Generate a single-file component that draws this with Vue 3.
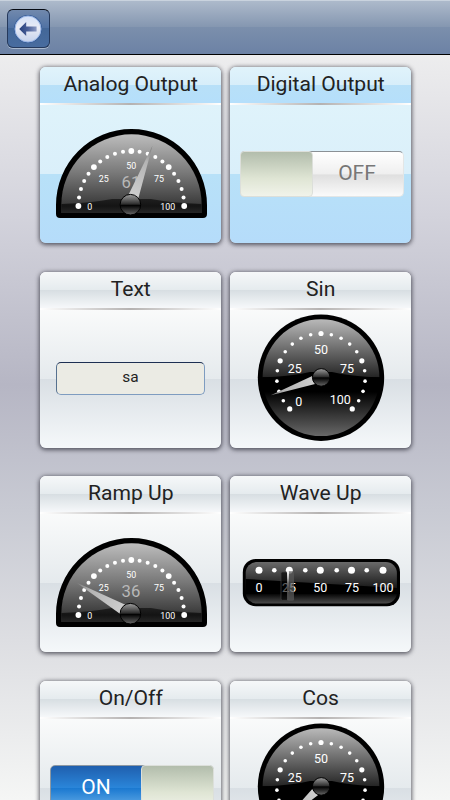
<template>
  <div class="page">
    <header class="toolbar">
      <button class="back" aria-label="Back">
        <svg width="30" height="30" viewBox="0 0 30 30">
          <defs>
            <linearGradient id="ball" x1="0" y1="0" x2="0" y2="1">
              <stop offset="0" stop-color="#d3e1f8" />
              <stop offset="0.45" stop-color="#e9ebf5" />
              <stop offset="1" stop-color="#c5d2ec" />
            </linearGradient>
            <linearGradient id="arrow" x1="0" y1="0" x2="1" y2="0">
              <stop offset="0" stop-color="#253f7c" />
              <stop offset="0.5" stop-color="#4a5f98" />
              <stop offset="1" stop-color="#8c9bc4" />
            </linearGradient>
          </defs>
          <circle cx="15" cy="15" r="14" fill="#365c97" />
          <circle cx="15" cy="15" r="13" fill="url(#ball)" stroke="#9ab6e6" stroke-width="1" />
          <path d="M6.2 15 L13.2 8 V12.5 H23.6 V17.5 H13.2 V22 Z" fill="url(#arrow)" />
        </svg>
      </button>
    </header>

    <main class="grid">
      <section v-for="card in cards" :key="card.title" class="card" :class="{ output: card.output }">
        <h2>{{ card.title }}</h2>
        <div class="line"></div>

        <div class="body">
          <div v-if="card.type === 'switch'" class="switch" :class="{ on: card.on }">
            <span class="state">{{ card.on ? 'ON' : 'OFF' }}</span>
            <span class="knob"></span>
          </div>

          <div v-else-if="card.type === 'text'" class="field">{{ card.value }}</div>

          <svg v-else-if="card.type === 'half'" width="182" height="138" viewBox="0 38 182 138">
            <path d="M16 147 V138 A75.5 76 0 0 1 167 138 V147 Q167 151 163 151 H20 Q16 151 16 147 Z" fill="#000" />
            <path d="M21.3 146 V138 A70.2 70.7 0 0 1 161.7 138 V146 Z" fill="url(#halfFill)" />
            <path d="M21.3 146 V137 Q52 136 72 132 H111 Q131 136 161.7 137 V146 Z" fill="url(#halfBase)" />
            <circle v-for="(d, i) in halfDots" :key="i" :cx="d.x" :cy="d.y" :r="d.big ? 2.9 : 2" fill="#fff" />
            <g class="small-label">
              <text x="49.7" y="143.3">0</text>
              <text x="63.8" y="115.3">25</text>
              <text x="91.3" y="101.5">50</text>
              <text x="119" y="115.3">75</text>
              <text x="127.7" y="143.3">100</text>
            </g>
            <text class="value" x="91" y="121.4">{{ card.value }}</text>
            <g transform="translate(90.4 137.7)">
              <path d="M-63 0 L-7 -5.4 V5.4 Z" fill="url(#needle)" :transform="`rotate(${card.angle})`" />
              <circle r="10.3" fill="url(#hub)" stroke="#000" stroke-width="1" />
            </g>
          </svg>

          <svg v-else-if="card.type === 'round'" width="182" height="138" viewBox="0 38 182 138">
            <circle cx="91" cy="105.7" r="63.2" fill="#000" />
            <circle cx="91" cy="105.7" r="58.4" fill="url(#roundFill)" />
            <path d="M32.6 105.4 Q62 104.5 80 100 H102 Q120 104.5 149.4 105.4 L148 112 H34 Z" fill="#000" />
            <circle v-for="(d, i) in roundDots" :key="i" :cx="d.x" :cy="d.y" :r="d.big ? 2.6 : 1.8" fill="#fff" />
            <g class="label">
              <text x="68.8" y="134.3">0</text>
              <text x="64.8" y="101.3">25</text>
              <text x="91" y="82">50</text>
              <text x="117" y="101.3">75</text>
              <text x="110.2" y="131.5">100</text>
            </g>
            <g transform="translate(91.2 105.4)">
              <path d="M-53.5 0 L-8 -4.2 V4.2 Z" fill="url(#needle)" :transform="`rotate(${card.angle})`" />
              <circle r="8.8" fill="url(#hub)" stroke="#000" stroke-width="1" />
            </g>
          </svg>

          <svg v-else width="182" height="138" viewBox="0 38 182 138">
            <rect x="12.8" y="83" width="157.2" height="47.2" rx="13" fill="#000" />
            <rect x="15.7" y="86" width="151.2" height="41.5" rx="11" fill="url(#barFill)" />
            <path d="M15.7 103 L166.9 112 V118 H15.7 Z" fill="#000" />
            <circle v-for="(x, i) in barDots" :key="i" :cx="x" cy="94.3" :r="i % 2 ? 2.3 : 3.5" fill="#fff" />
            <g class="label">
              <text x="29" y="116.2">0</text>
              <text x="59" y="116.2">25</text>
              <text x="90.3" y="116.2">50</text>
              <text x="122" y="116.2">75</text>
              <text x="153" y="116.2">100</text>
            </g>
            <rect x="51" y="96" width="7" height="28.3" rx="1.5" fill="#000" fill-opacity="0.62" stroke="#444" stroke-width="0.7" />
            <rect x="57" y="95.2" width="7" height="29.6" rx="1.5" fill="#585858" fill-opacity="0.75" />
            <rect x="57" y="95.2" width="2" height="18" fill="url(#glint)" />
          </svg>
        </div>
      </section>
    </main>

    <svg class="defs" width="0" height="0">
      <defs>
        <linearGradient id="halfFill" x1="0" y1="0" x2="0" y2="1">
          <stop offset="0" stop-color="#bdbdbd" />
          <stop offset="0.5" stop-color="#777" />
          <stop offset="1" stop-color="#2a2a2a" />
        </linearGradient>
        <linearGradient id="halfBase" x1="0" y1="0" x2="0" y2="1">
          <stop offset="0" stop-color="#1f1f1f" />
          <stop offset="0.5" stop-color="#141414" />
          <stop offset="1" stop-color="#262626" />
        </linearGradient>
        <linearGradient id="roundFill" x1="0" y1="0" x2="0" y2="1">
          <stop offset="0" stop-color="#b9b9b9" />
          <stop offset="0.49" stop-color="#262626" />
          <stop offset="0.5" stop-color="#000" />
          <stop offset="0.62" stop-color="#000" />
          <stop offset="1" stop-color="#686868" />
        </linearGradient>
        <linearGradient id="barFill" x1="0" y1="0" x2="0" y2="1">
          <stop offset="0" stop-color="#6a6a6a" />
          <stop offset="0.6" stop-color="#1c1c1c" />
          <stop offset="0.75" stop-color="#000" />
          <stop offset="1" stop-color="#4c4c4c" />
        </linearGradient>
        <linearGradient id="needle" x1="0" y1="0" x2="1" y2="0">
          <stop offset="0" stop-color="#777" />
          <stop offset="0.3" stop-color="#b4b4b4" />
          <stop offset="1" stop-color="#cfcfcf" />
        </linearGradient>
        <linearGradient id="hub" x1="0" y1="0" x2="0" y2="1">
          <stop offset="0" stop-color="#a0a0a0" />
          <stop offset="0.48" stop-color="#2b2b2b" />
          <stop offset="0.52" stop-color="#000" />
          <stop offset="0.6" stop-color="#111" />
          <stop offset="1" stop-color="#686868" />
        </linearGradient>
        <linearGradient id="glint" x1="0" y1="0" x2="0" y2="1">
          <stop offset="0" stop-color="#fff" />
          <stop offset="0.4" stop-color="#aaa" />
          <stop offset="1" stop-color="#444" stop-opacity="0" />
        </linearGradient>
      </defs>
    </svg>
  </div>
</template>

<script setup>
import { ref } from 'vue'

const cards = ref([
  { title: 'Analog Output', type: 'half', value: 61, angle: 110.5, output: true },
  { title: 'Digital Output', type: 'switch', on: false, output: true },
  { title: 'Text', type: 'text', value: 'sa' },
  { title: 'Sin', type: 'round', angle: -19.5 },
  { title: 'Ramp Up', type: 'half', value: 36, angle: 30 },
  { title: 'Wave Up', type: 'bar' },
  { title: 'On/Off', type: 'switch', on: true },
  { title: 'Cos', type: 'round', angle: -43 }
])

// 21 dots from 0 to 100, every fifth one is big
function makeDots(cx, cy, rx, ry, start, sweep) {
  const dots = []
  for (let i = 0; i <= 20; i++) {
    const a = ((start + (sweep * i) / 20) * Math.PI) / 180
    dots.push({ x: cx + rx * Math.cos(a), y: cy + ry * Math.sin(a), big: i % 5 === 0 })
  }
  return dots
}

const halfDots = makeDots(91.3, 139, 52.9, 55, 180, 180)
const roundDots = makeDots(91, 105.7, 44.2, 44.2, 135, 270)
const barDots = [29, 44.3, 59.3, 75.3, 90.3, 106.7, 121.5, 136.7, 153]
</script>

<style>
body {
  margin: 0;
  overflow: hidden;
}
</style>

<style scoped>
.page {
  height: 800px;
  overflow: hidden;
  font-family: Roboto, Arial, sans-serif;
  background: linear-gradient(#ededee 55px, #d3d3dc 215px, #b6b6c4 385px, #c8cad3 510px, #dddee2 640px, #f5f6f5 800px);
}

/* Toolbar */
.toolbar {
  box-sizing: border-box;
  height: 55px;
  padding: 8px 0 0 7px;
  border-top: 1px solid #c9d3de;
  border-bottom: 1px solid #000;
  background: linear-gradient(#adbacb, #8496b0 50%, #7b8fac 50%, #6c82a5);
}

.back {
  display: flex;
  align-items: center;
  justify-content: center;
  box-sizing: border-box;
  width: 43px;
  height: 39px;
  padding: 0 2px 0 0;
  border: 1px solid #25395c;
  border-top-color: #060b14;
  border-radius: 6px;
  background: linear-gradient(#7189ad, #4f71a3 50%, #436798 50%, #486c9f);
  box-shadow: 0 1px 0 #a9b8cd;
}

/* Cards */
.grid {
  display: grid;
  grid-template-columns: 182px 182px;
  grid-auto-rows: 176px;
  gap: 28.6px 8px;
  padding: 12px 0 0 40px;
}

.card {
  box-sizing: border-box;
  width: 181.4px;
  overflow: hidden;
  border-radius: 6px;
  background: linear-gradient(#fafbfb 36px, #e5eaed 107px, #d9dfe4 107px, #f5f8fa);
  box-shadow: 0 1px 4px 1px rgba(50, 50, 60, 0.75);
}

.card h2 {
  height: 36px;
  margin: 0;
  line-height: 34px;
  font-size: 21.1px;
  font-weight: 400;
  text-align: center;
  color: #222;
  background: linear-gradient(#f6f8f9, #e5ebee 50%, #d7dee2 50%, #f6f8fa);
}

.line {
  height: 2px;
  background: linear-gradient(to right, #fff, #b5b2b1 50%, #fff);
}

.output {
  background: linear-gradient(#dff3fb 36px, #daeffa 107px, #b8e1f8 107px, #b5dcfa);
}

.output h2 {
  background: linear-gradient(#e0f3fb, #d7eefa 50%, #b8e0f8 50%, #b5dffb);
}

.body {
  display: flex;
  justify-content: center;
  width: 182px;
  height: 138px;
}

.defs {
  display: block;
}

/* Gauge texts */
.small-label,
.label,
.value {
  fill: #fff;
  text-anchor: middle;
}

.small-label {
  font-size: 8.9px;
}

.label {
  font-size: 12.5px;
}

.value {
  font-size: 16.7px;
  fill: #b8b8b8;
}

/* Switch */
.switch {
  display: flex;
  flex-direction: row-reverse;
  box-sizing: border-box;
  width: 164px;
  height: 46px;
  margin: 46px 0 0 2px;
  border: 1px solid #e3e6e6;
  border-top-color: #8b9196;
  border-radius: 5px;
  background: linear-gradient(#fff, #efefef 50%, #dfdfdf 52%, #fafafa);
}

.state {
  flex: 1;
  padding-right: 2px;
  line-height: 42px;
  font-size: 21px;
  text-align: center;
  color: #777;
}

.knob {
  box-sizing: border-box;
  width: 73px;
  height: 46px;
  margin: -1px 0 -1px -1px;
  border: 1px solid #dcdfda;
  border-radius: 4px;
  background: linear-gradient(#b2bdac, #dfe5d4 60%, #f1f3ea);
}

.on {
  flex-direction: row;
  border-color: #8d98a2;
  background: linear-gradient(#1f5fae, #2a86da 50%, #1a78d0 50%, #6cb2ea);
}

.on .state {
  padding-right: 0;
  color: #fff;
}

.on .knob {
  margin: -1px -1px -1px 0;
}

/* Text field */
.field {
  box-sizing: border-box;
  width: 149px;
  height: 33px;
  margin: 52px 1px 0 0;
  border: 1px solid #7e9cc0;
  border-top-color: #1d2f52;
  border-left-color: #56718f;
  border-radius: 5px;
  line-height: 29px;
  font-size: 15.4px;
  text-align: center;
  color: #222;
  background: #ebebe4;
}
</style>
